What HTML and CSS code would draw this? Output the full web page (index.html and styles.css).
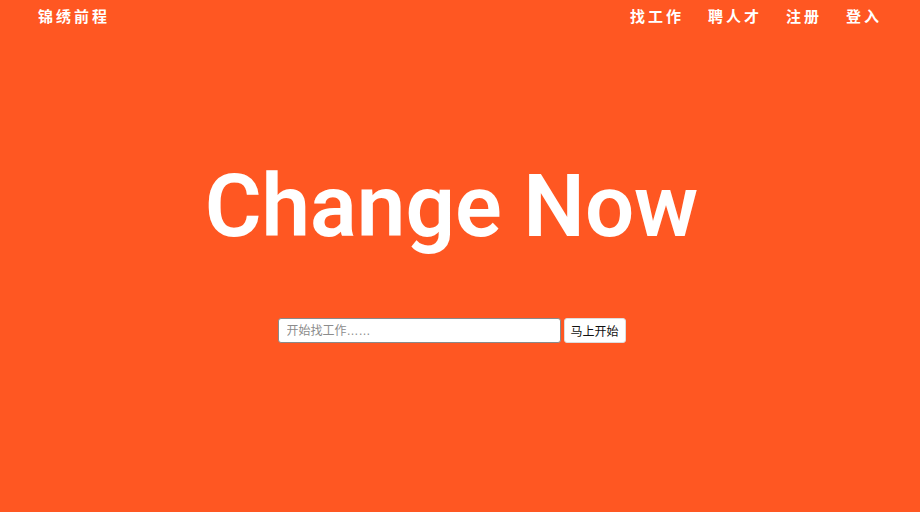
FILE: index.html
```html
<!DOCTYPE html>
<html lang="zh-CN">
<head>
<meta charset="utf-8">
<title>锦绣前程</title>
<link rel="stylesheet" href="styles.css">
</head>
<body>
<header class="topbar">
  <a class="logo" href="#">锦绣前程</a>
  <nav class="menu">
    <a href="#">找工作</a>
    <a href="#">聘人才</a>
    <a href="#">注册</a>
    <a href="#">登入</a>
  </nav>
</header>
<main class="hero">
  <h1 class="title">Change Now</h1>
  <form class="search">
    <input class="search-input" type="text" placeholder="开始找工作……">
    <button class="search-btn" type="button">马上开始</button>
  </form>
</main>
</body>
</html>
```
FILE: styles.css
```css
html, body {
  margin: 0;
  padding: 0;
  height: 100%;
}
body {
  background: #ff5722;
  font-family: "Liberation Sans", "Noto Sans CJK SC", sans-serif;
  color: #fff;
}
.topbar {
  display: flex;
  justify-content: space-between;
  align-items: center;
  height: 31px;
  padding: 0 38px 0 38px;
}
.logo {
  color: #fff;
  text-decoration: none;
  font-size: 15px;
  font-weight: bold;
  letter-spacing: 3px;
  font-family: "Noto Sans CJK SC", sans-serif;
}
.menu {
  display: flex;
  gap: 24px;
}
.menu a {
  color: #fff;
  text-decoration: none;
  font-size: 15px;
  font-weight: bold;
  letter-spacing: 3px;
  font-family: "Noto Sans CJK SC", sans-serif;
}
.hero {
  display: flex;
  flex-direction: column;
  align-items: center;
  padding-right: 17px;
}
.title {
  margin: 125px 0 0;
  font-family: Roboto, "Liberation Sans", sans-serif;
  font-size: 87px;
  font-weight: 600;
  line-height: 100px;
  letter-spacing: 0;
}
.search {
  display: flex;
  gap: 3px;
  margin-top: 62px;
}
.search-input {
  width: 283px;
  height: 25px;
  box-sizing: border-box;
  padding: 0 8px;
  border: 1px solid #8a8a8a;
  border-radius: 3px;
  font-size: 12px;
  font-family: "Liberation Sans", "Noto Sans CJK SC", sans-serif;
  color: #333;
  background: #fff;
}
.search-input::placeholder {
  color: #8c8c8c;
}
.search-btn {
  width: 62px;
  height: 25px;
  box-sizing: border-box;
  border: 1px solid #ddd;
  border-radius: 3px;
  background: #fff;
  font-size: 12px;
  font-family: "Noto Sans CJK SC", sans-serif;
  color: #111;
  padding: 0;
}
```
